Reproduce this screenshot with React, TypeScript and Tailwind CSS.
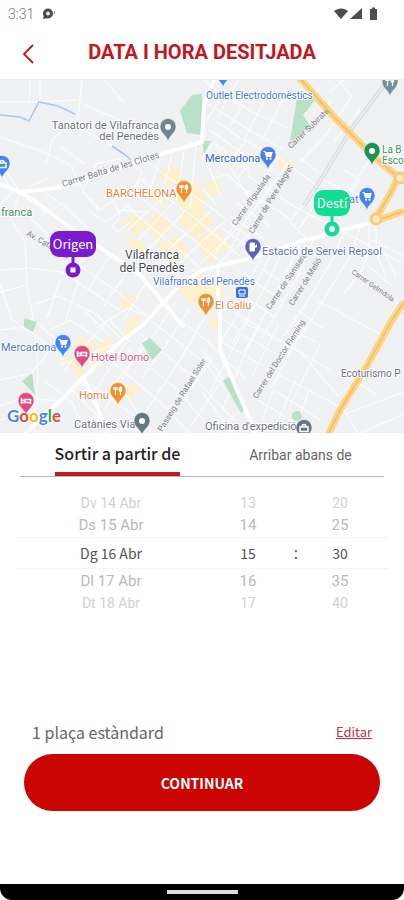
import { useState } from 'react';
import type { ReactNode } from 'react';

type TabId = 'departure' | 'arrival';

const TABS: { id: TabId; label: string }[] = [
  { id: 'departure', label: 'Sortir a partir de' },
  { id: 'arrival', label: 'Arribar abans de' },
];

const DAYS = ['Dv 14 Abr', 'Ds 15 Abr', 'Dg 16 Abr', 'Dl 17 Abr', 'Dt 18 Abr'];
const HOURS = Array.from({ length: 24 }, (_, i) => String(i).padStart(2, '0'));
const MINUTES = Array.from({ length: 12 }, (_, i) => String(i * 5).padStart(2, '0'));

const SOURCE = "font-['Noto_Sans_CJK_JP','Noto_Sans',sans-serif]";

// ---- Map data ----

const MINOR_STREETS = [
  'M0 22H30L78 20M30 0V12L28 22M82 0L78 38M40 0V22L30 40',
  'M0 57L38 70 70 84 84 112 98 130M46 84L52 60 70 42M70 42L112 66M60 66L84 84',
  'M84 25L160 56M104 0L124 22M0 82L20 112M0 90L12 112 0 125',
  'M20 112L10 138 25 161 27 205 33 238 38 290 34 353M20 112L48 98',
  'M36 118L44 134 62 124 46 114M62 124L90 150 M30 138L66 170',
  'M0 190L30 188 62 192 120 230M0 212L27 205M0 205L12 238M60 200L47 238M80 196L66 240M33 225L58 216 100 236',
  'M72 180L112 208 150 238M90 168L70 200M110 176L88 210M128 190L104 226M146 202L124 240',
  'M0 250L24 247 52 268 32 292M30 238L60 262M50 250L70 240 104 262M10 238L52 268 64 280M0 300L34 293M0 326L24 318 60 321M44 300L72 322 86 353',
  'M90 118L100 130 128 110 146 98M84 108L96 84 122 78 142 92M90 132L106 142 128 126 142 140',
  'M114 120L120 138 112 146 118 152 130 142M116 130L146 132M128 150L160 120M138 160L172 124M150 168L186 130',
  'M142 100L192 136 240 176M150 84L206 124 250 158M134 112L176 146 224 184M128 128L162 156 206 192M142 92L130 118',
  'M160 78L148 118M172 74L160 124M184 72L176 120M196 66L190 130M200 62L220 116M168 170L214 128M180 182L226 140M192 192L236 150M210 192L246 158',
  'M202 78L214 62 232 90 250 120M214 62L250 92M208 24L246 48 284 70M218 10L252 32 288 48M212 38L240 58 282 80M210 50L262 88',
  'M204 0L222 16 206 42M238 0L218 36M252 10L232 44M270 10L244 60M286 14L262 60M246 60L230 82M262 66L238 98M276 80L214 176M288 84L246 140 226 178',
  'M248 96L300 130M242 108L292 140M236 122L270 146M230 136L262 158M222 148L252 170M282 80L320 108M300 78L318 92M212 100L226 94 256 120M204 110L216 124',
  'M320 8L302 28M332 20L308 54M344 0L330 12M352 16L322 60 300 82M360 30L334 62M372 76L336 132M344 90L360 100 340 128M324 100L346 112M386 70L404 82M338 0L352 16',
  'M302 125L290 142M318 120L300 148M300 130L340 150 404 184M290 142L308 160M345 150L334 176 312 214 284 256M360 147L350 176 300 258',
  'M369 143V170L362 190 344 214M376 142V172L386 196M372 160L404 176M384 172L396 196M366 184L392 206M350 190L400 224',
  'M272 172L256 204 222 260M284 168L266 206 232 264M300 164L284 198 244 272M314 158L298 196 262 258M260 188L290 206M252 200L284 222M244 216L276 238M234 232L330 290M262 178L240 214',
  'M240 240L300 272 340 318M222 262L270 290 342 328M234 250L280 276M222 238L240 250M250 238L232 270 210 312M262 240L244 276 222 330M278 246L252 296M300 240L262 310M316 220L380 254M300 232L322 248M292 250L316 262',
  'M320 264L290 326M300 254L272 306M342 328L326 353M310 308L294 353M296 300L278 340M280 292L262 340M268 306L320 340M258 320L300 346M336 290L376 314M344 330L358 353M340 336L404 312M360 353L404 334',
  'M206 236L190 262 174 290M190 228L168 262 142 298M176 222L150 260 110 308M164 228L206 260 246 300M150 240L204 282 226 310M140 254L192 296 236 342M126 268L176 308 214 353M112 282L160 322 190 353',
  'M206 284L160 353M222 300L186 353M192 262L140 340M146 258L104 330M126 262L96 310M90 304L140 340M100 316L96 353M116 300L152 353M202 312L232 353M240 330L218 353M70 308L98 336M60 285L120 262M64 290L108 240',
  'M202 270L232 310 258 353M212 280L190 310M0 340L30 332 46 353M110 240L130 262M98 236L120 258M84 230L110 256M96 248L128 228 150 238',
];

const MAIN_STREETS = [
  'M0 104L20 112 55 108 80 101 165 73 202 62',
  'M20 112L36 122 67 145 120 181 140 195 163 222 183 246',
  'M202 62L204 24 214 0',
  'M369 143L302 161 252 178 202 190 178 207 143 245 120 262 83 298 60 321 26 353',
  'M83 298L96 324 107 353',
  'M218 190L218 216 220 238 220 270 236 308 256 353',
];

const OLD_TOWN = [
  'M158 92L176 84 184 98 168 108Z',
  'M150 104L168 112 164 126 146 118Z',
  'M168 114L194 100 208 120 188 134Z',
  'M122 142L136 134 148 146 134 156Z',
  'M144 144L158 132 174 148 158 162Z',
  'M176 138L200 124 214 142 194 158Z',
  'M126 158L140 160 150 174 134 176Z',
  'M156 164L178 156 190 172 172 184Z',
  'M194 160L216 148 232 166 208 182Z',
  'M122 214L136 216 130 232 118 226Z',
  'M192 196L222 196 224 218 200 214Z',
  'M178 208L196 198 202 216 190 224Z',
  'M78 258L96 262 92 274 76 268Z',
  'M64 278L74 276 84 292 78 298Z',
  'M100 262L112 256 108 276 92 286Z',
  'M128 240L142 234 134 250 122 258Z',
  'M132 302L140 310 128 322 120 314Z',
  'M280 76L294 84 290 92 278 88Z',
  'M204 104L216 98 224 114 208 116Z',
  'M212 236L222 240 218 250 208 244Z',
];

const PARKS = [
  'M180 31L192 15 202 14V55L187 53Z',
  'M202 61H211L204 74Z',
  'M298 11L315 20 303 35 310 46 290 62Z',
];

// Small gardens that sit over the street grid
const GARDENS = [
  'M24 238L37 242 33 252 24 247Z',
  'M142 263L150 258 162 270 152 280Z',
  'M22 301L32 293 35 315Z',
  'M223 301L230 296 245 328 241 333Z',
];

const HIGHWAYS = [
  'M296 -6L304 3 335 38 372 75 398 97',
  'M398 98L390 114 376 138',
  'M376 141L404 131',
  'M404 222L392 240 368 284 340 330 328 355',
];

type Label = {
  text: string;
  x: number;
  y: number;
  color: string;
  size?: number;
  anchor?: 'start' | 'middle' | 'end';
};

const BLUE = '#4a78d8';
const GREY = '#6b7378';
const ORANGE = '#dd8348';

const LABELS: Label[] = [
  { text: 'Outlet Electrodomèstics', x: 206, y: 19, color: BLUE, size: 10 },
  { text: 'Tanatori de Vilafranca', x: 159, y: 49, color: GREY, anchor: 'end' },
  { text: 'del Penedès', x: 159, y: 60, color: GREY, anchor: 'end' },
  { text: 'Mercadona', x: 205, y: 82, color: '#2f66d0' },
  { text: 'BARCHELONA', x: 106, y: 117, color: ORANGE },
  { text: 'franca', x: 1, y: 136, color: '#3f9162' },
  { text: 'La B', x: 382, y: 73, color: '#3f9162', size: 10 },
  { text: 'Esco', x: 382, y: 84, color: '#3f9162', size: 10 },
  { text: 'at', x: 349, y: 123, color: BLUE },
  { text: 'Vilafranca', x: 152, y: 179, color: '#454b50', size: 12, anchor: 'middle' },
  { text: 'del Penedès', x: 152, y: 192, color: '#454b50', size: 12, anchor: 'middle' },
  { text: 'Vilafranca del Penedès', x: 153, y: 205, color: BLUE, size: 10 },
  { text: 'Estació de Servei Repsol', x: 262, y: 175, color: '#6670bd' },
  { text: 'El Caliu', x: 215, y: 229, color: ORANGE },
  { text: 'Mercadona', x: 1, y: 271, color: BLUE },
  { text: 'Hotel Domo', x: 91, y: 281, color: '#dc5485' },
  { text: 'Homu', x: 79, y: 319, color: ORANGE },
  { text: 'Catànies Via', x: 74, y: 348, color: GREY },
  { text: "Oficina d'expedició", x: 205, y: 350, color: GREY },
  { text: 'Ecoturismo P', x: 341, y: 297, color: GREY, size: 10 },
];

const STREET_NAMES = [
  { text: 'Carrer Baltà de les Clotes', x: 63, y: 107, angle: -17, size: 9 },
  { text: 'Carrer Subirats', x: 291, y: 69, angle: -44 },
  { text: "Carrer d'Igualada", x: 236, y: 146, angle: -55 },
  { text: 'Carrer de Pere Alegret', x: 253, y: 154, angle: -59 },
  { text: 'Av. Catalunya', x: 26, y: 155, angle: 30 },
  { text: 'Carrer de Samsera', x: 270, y: 230, angle: -56 },
  { text: 'Carrer de Melió', x: 293, y: 226, angle: -58 },
  { text: 'Carrer Gelmdola', x: 351, y: 193, angle: 35, size: 7 },
  { text: 'Carrer del Doctor Fleming', x: 257, y: 319, angle: -58 },
  { text: 'Passeig de Rafael Soler', x: 162, y: 352, angle: -58 },
];

// White pictograms centred on the head of a pin
const Glyphs = {
  cart: (
    <g fill="none" stroke="#fff" strokeWidth="1.2">
      <path d="M-4.500-3.500H-3L-1.500 1.500H3L4-2.500H-2.500" fill="#fff" />
      <circle cx="-1" cy="3.700" r=".5" />
      <circle cx="2.500" cy="3.700" r=".5" />
    </g>
  ),
  food: <path d="M-2.500-4V4M-4-4V-1.500H-1V-4M2.500 4V-4C1-3 1-1 1.500 0H3.500V-4" fill="none" stroke="#fff" strokeWidth="1.200" />,
  bed: <path d="M-4.500-3V3M-4.500 1.500H4.500V3M4.500 1V-1.500H-1V1M-3-1.500V0" fill="none" stroke="#fff" strokeWidth="1.600" />,
  fuel: <path d="M-3 4V-4H1.500V4ZM1.500 0H3.500V-2.500" fill="#fff" stroke="#fff" />,
  bag: <path d="M-4-1H4V3.500H-4ZM-2-1C-2-4.500 2-4.500 2-1" fill="none" stroke="#fff" strokeWidth="1.500" />,
  dot: <circle r="3" fill="#fff" />,
};

const PINS: { x: number; y: number; color: string; glyph: keyof typeof Glyphs }[] = [
  { x: 223, y: -7, color: '#4285f4', glyph: 'bag' },
  { x: 390, y: 2, color: '#78909c', glyph: 'food' },
  { x: 168, y: 47, color: '#6f858f', glyph: 'dot' },
  { x: 2, y: 84, color: '#4285f4', glyph: 'bag' },
  { x: 268, y: 75, color: '#4c80e8', glyph: 'cart' },
  { x: 372, y: 71, color: '#1e9150', glyph: 'dot' },
  { x: 184, y: 109, color: '#f0912b', glyph: 'food' },
  { x: 367, y: 116, color: '#4285f4', glyph: 'cart' },
  { x: 253, y: 167, color: '#5c62b5', glyph: 'fuel' },
  { x: 206, y: 222, color: '#f0912b', glyph: 'food' },
  { x: 63, y: 263, color: '#4285f4', glyph: 'cart' },
  { x: 82, y: 274, color: '#e6497f', glyph: 'bed' },
  { x: 118, y: 311, color: '#f0912b', glyph: 'food' },
  { x: 26, y: 321, color: '#e6497f', glyph: 'bed' },
  { x: 142, y: 341, color: '#627983', glyph: 'dot' },
  { x: 304, y: 348, color: '#627983', glyph: 'bag' },
];

const GOOGLE_LETTERS = [
  { char: 'G', color: '#4285f4' },
  { char: 'o', color: '#ea4335' },
  { char: 'o', color: '#fbbc05' },
  { char: 'g', color: '#4285f4' },
  { char: 'l', color: '#34a853' },
  { char: 'e', color: '#ea4335' },
];

function Pin({ x, y, color, children }: { x: number; y: number; color: string; children: ReactNode }) {
  return (
    <g transform={`translate(${x} ${y})`}>
      <path
        d="M0 14.500C-1 8.500-8 6-8-.5A8 8 0 0 1 8-.5C8 6 1 8.500 0 14.500Z"
        fill={color}
        stroke="#fff"
        strokeWidth=".5"
      />
      {children}
    </g>
  );
}

type MarkerProps = { x: number; y: number; width: number; label: string; color: string; square?: boolean };

function RouteMarker({ x, y, width, label, color, square }: MarkerProps) {
  return (
    <g transform={`translate(${x} ${y})`}>
      <rect x={-width / 2} y="-39" width={width} height="26" rx="9" fill={color} />
      <path d="M0-14V0" stroke={color} strokeWidth="3" />
      <circle r="7.500" fill={color} />
      {square ? <rect x="-2.500" y="-2.500" width="5" height="5" fill="#fff" /> : <circle r="3" fill="#fff" />}
      <text y="-21" textAnchor="middle" fill="#fff" className={`${SOURCE} text-[13px]`}>
        {label}
      </text>
    </g>
  );
}

function RouteMap() {
  return (
    <svg
      viewBox="0 0 404 353"
      preserveAspectRatio="xMidYMid slice"
      className="block w-full aspect-[404/353] bg-[#eff1f3] font-[Roboto,sans-serif]"
    >
      <g fill="#fcf0cd">
        {OLD_TOWN.map((d) => (
          <path key={d} d={d} />
        ))}
      </g>
      <g fill="none" stroke="#fafbfc" strokeWidth="1.3" strokeLinejoin="round">
        {MINOR_STREETS.map((d) => (
          <path key={d} d={d} />
        ))}
      </g>
      <g fill="#b9e0c9">
        {PARKS.map((d) => (
          <path key={d} d={d} />
        ))}
        {GARDENS.map((d) => (
          <path key={d} d={d} />
        ))}
        <circle cx="297" cy="336" r="5" />
      </g>
      <g fill="none" stroke="#fff" strokeWidth="4" strokeLinejoin="round" strokeLinecap="round">
        {MAIN_STREETS.map((d) => (
          <path key={d} d={d} />
        ))}
      </g>
      <path d="M0 35L20 37 29 41 39 22 58 26 75 34M112 66L124 74 131 80" fill="none" stroke="#a9c6f5" strokeWidth="1.6" />

      {/* Railway */}
      <path d="M388 0L352 48 328 88 304 126" fill="none" stroke="#d8dadd" strokeWidth="4" />
      <path d="M388 0L352 48 328 88 304 126" fill="none" stroke="#eceef0" strokeWidth="2" />

      <g fill="none" strokeLinejoin="round">
        {HIGHWAYS.map((d) => (
          <path key={d} d={d} stroke="#fbd588" strokeWidth="7" />
        ))}
        {HIGHWAYS.map((d) => (
          <path key={d} d={d} stroke="#f5be5c" strokeWidth="1.5" />
        ))}
        <circle cx="400" cy="98" r="5" fill="#f7ecd2" stroke="#f8cb74" strokeWidth="3" />
        <circle cx="376" cy="139" r="5" fill="#f7ecd2" stroke="#f8cb74" strokeWidth="3" />
      </g>

      <g fill="#7d8286">
        {STREET_NAMES.map((s) => (
          <text key={s.text} transform={`translate(${s.x} ${s.y}) rotate(${s.angle})`} fontSize={s.size ?? 8}>
            {s.text}
          </text>
        ))}
      </g>
      <g stroke="#fff" strokeWidth="2" paintOrder="stroke" strokeLinejoin="round">
        {LABELS.map((l) => (
          <text key={`${l.text}-${l.y}`} x={l.x} y={l.y} fill={l.color} fontSize={l.size ?? 11} textAnchor={l.anchor}>
            {l.text}
          </text>
        ))}
      </g>

      {/* Train station */}
      <rect x="236" y="207" width="12" height="11" rx="2" fill="#3b74df" />
      <path d="M239 210H245V214H239ZM239 216H245" fill="#3b74df" stroke="#fff" />

      {PINS.map((pin) => (
        <Pin key={`${pin.x}-${pin.y}`} x={pin.x} y={pin.y} color={pin.color}>
          {Glyphs[pin.glyph]}
        </Pin>
      ))}

      <RouteMarker x={73} y={190} width={46} label="Origen" color="#7a1bd2" square />
      <RouteMarker x={332} y={149} width={36} label="Destí" color="#12dd94" />

      <text
        x="7"
        y="342"
        stroke="#fff"
        strokeWidth="2"
        paintOrder="stroke"
        className="font-[Lato,sans-serif] text-[17px] font-bold"
      >
        {GOOGLE_LETTERS.map((l, i) => (
          <tspan key={i} fill={l.color}>
            {l.char}
          </tspan>
        ))}
      </text>
    </svg>
  );
}

function StatusBar() {
  return (
    <div className="flex h-7 items-center justify-between pl-2 pr-6">
      <div className="flex items-center gap-2">
        <span className="font-[Roboto,sans-serif] text-sm font-light text-[#777]">3:31</span>
        <svg width="14" height="12" viewBox="0 0 14 12">
          <circle cx="6" cy="5.500" r="5" fill="#4c4c4c" />
          <path d="M1 11L2 7 6 10Z" fill="#4c4c4c" />
          <circle cx="6" cy="5.500" r="2" fill="#e6e6e6" />
          <path d="M12.500 3V6" stroke="#999" />
        </svg>
      </div>
      <svg width="46" height="14" viewBox="0 0 46 14" fill="#4d4d4d">
        <path d="M0 4C4 .5 10 .5 14 4L7 12Z" />
        <path d="M16 12H28V1Z" />
        <path d="M36 2H38V.5H41V2H43V13H36Z" />
      </svg>
    </div>
  );
}

type WheelProps = {
  label: string;
  options: string[];
  selected: number;
  onSelect: (index: number) => void;
};

const ROW_STYLES: Record<string, string> = {
  '-2': 'h-5 text-sm text-[#cfd1d6]',
  '-1': 'h-6 text-[15px] text-[#b7bac1]',
  '1': 'h-6 text-[15px] text-[#b7bac1]',
  '2': 'h-5 text-sm text-[#cfd1d6]',
};

function Wheel({ label, options, selected, onSelect }: WheelProps) {
  return (
    <div role="group" aria-label={label} className="flex flex-col items-center font-[Roboto,sans-serif]">
      {[-2, -1, 0, 1, 2].map((offset) => {
        const index = (selected + offset + options.length) % options.length;
        if (offset === 0) {
          return (
            <span key={offset} className={`${SOURCE} flex h-8 items-center text-sm text-[#555]`}>
              {options[index]}
            </span>
          );
        }
        return (
          <button
            key={offset}
            type="button"
            className={`flex items-center ${ROW_STYLES[offset]}`}
            onClick={() => onSelect(index)}
          >
            {options[index]}
          </button>
        );
      })}
    </div>
  );
}

export default function App() {
  const [tab, setTab] = useState<TabId>('departure');
  const [day, setDay] = useState(2);
  const [hour, setHour] = useState(15);
  const [minute, setMinute] = useState(6);

  return (
    <div className="flex min-h-screen flex-col bg-white">
      <StatusBar />

      <header className="grid h-[52px] grid-cols-[56px_1fr_56px] items-center border-b border-[#eee]">
        <button type="button" aria-label="Enrere" className="flex h-full items-center justify-center">
          <svg width="12" height="20" viewBox="0 0 12 20" fill="none" stroke="#c4161c" strokeWidth="1.8">
            <path d="M11 1L2 10L11 19" />
          </svg>
        </button>
        <h1 className="whitespace-nowrap pb-1 text-center font-[Roboto,sans-serif] text-xl font-bold text-[#c4161c]">
          DATA I HORA DESITJADA
        </h1>
      </header>

      <RouteMap />

      <div role="tablist" className="grid grid-cols-2 pl-[26px] pr-3">
        {TABS.map((t) => (
          <button
            key={t.id}
            type="button"
            role="tab"
            aria-selected={tab === t.id}
            onClick={() => setTab(t.id)}
            className="flex h-[43px] justify-center"
          >
            <span
              className={
                tab === t.id
                  ? `${SOURCE} flex h-full items-center border-b-4 border-[#c4161c] text-base font-medium text-[#222]`
                  : 'flex h-full items-center font-[Roboto,sans-serif] text-sm text-[#666]'
              }
            >
              {t.label}
            </span>
          </button>
        ))}
      </div>
      <div className="mx-5 h-px bg-[#b5b8bb]" />

      <div className="relative mt-4 grid grid-cols-[222px_52px_44px_44px]">
        <div className="pointer-events-none absolute inset-x-4 top-11 h-8 border-y border-[#f5f5f5]" />
        <Wheel label="Dia" options={DAYS} selected={day} onSelect={setDay} />
        <Wheel label="Hora" options={HOURS} selected={hour} onSelect={setHour} />
        <span className="flex items-center justify-center text-[#555]">:</span>
        <Wheel label="Minuts" options={MINUTES} selected={minute} onSelect={setMinute} />
      </div>

      <div className={`${SOURCE} mt-auto px-6 pb-[73px]`}>
        <div className="flex items-center justify-between px-2 pb-3 leading-5">
          <span className="text-base leading-5 text-[#666]">1 plaça estàndard</span>
          <a href="#places" className="text-[13px] leading-5 text-[#c9303a] underline">
            Editar
          </a>
        </div>
        <button
          type="button"
          className="flex h-[57px] w-full items-center justify-center rounded-full bg-[#cb0404] text-sm font-bold text-white"
        >
          CONTINUAR
        </button>
      </div>

      <div className="flex h-4 items-center justify-center rounded-b-xl bg-black">
        <div className="h-1 w-[71px] bg-[#dedede]" />
      </div>
    </div>
  );
}
